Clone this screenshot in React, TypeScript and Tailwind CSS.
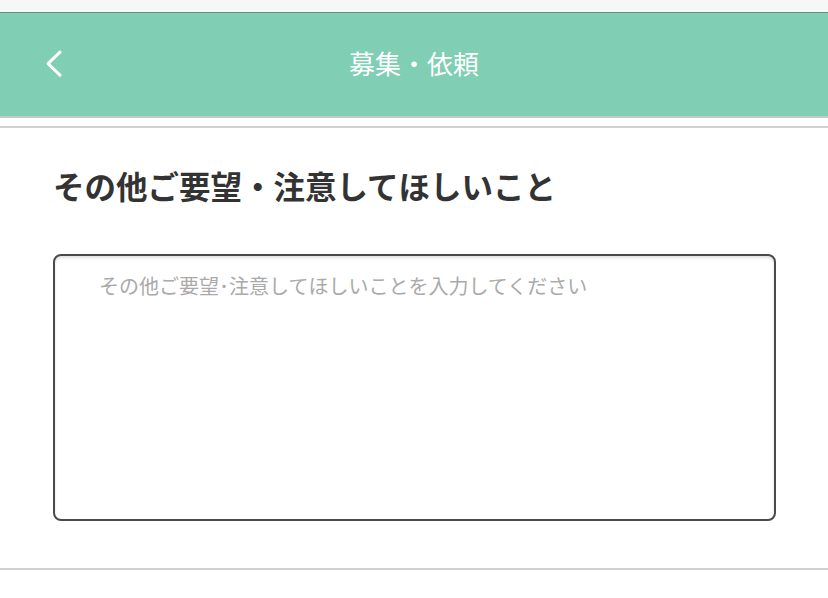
import React from "react";

const font = { fontFamily: '"Noto Sans CJK JP", "Noto Sans", sans-serif' };

export default function App() {
  return (
    <div className="min-h-[598px] w-[828px] bg-white" style={font}>
      {/* status strip */}
      <div className="h-[12px] bg-[#f7f7f7]" />
      <div className="h-px bg-[#5c9482]" />

      {/* header */}
      <header className="relative flex h-[103px] items-center justify-center bg-[#80ceb3]">
        <button className="absolute left-[38px] top-1/2 -translate-y-[55%] p-1">
          <svg width="24" height="30" viewBox="0 0 24 30" fill="none">
            <path d="M18 4 L6 15.5 L18 27" stroke="white" strokeWidth="3" strokeLinecap="round" strokeLinejoin="round" />
          </svg>
        </button>
        <h1 className="-mt-[3px] text-[26px] font-normal leading-none text-white">募集・依頼</h1>
      </header>
      <div className="h-[2px] bg-[#c8c8c8]" />
      <div className="mt-[8px] h-[2px] bg-[#d0d0d0]" />

      {/* form section */}
      <section className="px-[53px]">
        <h2 className="mt-[37px] text-[31.5px] font-bold leading-[40px] text-[#333]">
          その他ご要望・注意してほしいこと
        </h2>
        <textarea
          className="mt-[49px] block h-[267px] w-[723px] resize-none rounded-[8px] border-2 border-[#4a4a4a] pl-[44px] pr-4 pt-[16px] text-[20px] leading-[28px] text-[#333] shadow-[inset_0_2px_3px_rgba(0,0,0,0.12)] outline-none placeholder:text-[#aaaaaa]"
          placeholder="その他ご要望･注意してほしいことを入力してください"
        />
      </section>
      <div className="mt-[47px] h-[2px] bg-[#d0d0d0]" />
    </div>
  );
}
